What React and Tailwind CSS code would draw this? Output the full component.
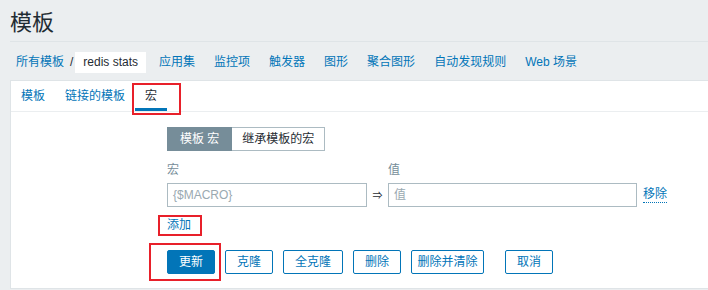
export default function App() {
  const navItems = ['应用集', '监控项', '触发器', '图形', '聚合图形', '自动发现规则', 'Web 场景'];
  const buttons = [
    { label: '克隆', w: 'w-[48px]' },
    { label: '全克隆', w: 'w-[60px]' },
    { label: '删除', w: 'w-[48px]' },
    { label: '删除并清除', w: 'w-[73px]' },
  ];

  return (
    <div className="min-h-[290px] bg-[#ebeef0] pl-[10px] text-[12px] text-[#1f2c33] font-['Liberation_Sans','Noto_Sans_CJK_SC',sans-serif]">
      {/* Header */}
      <div className="h-[42px] pt-[7px] border-b border-[#dfe4e7]">
        <h1 className="text-[22px] leading-[32px] font-normal">模板</h1>
      </div>

      {/* Breadcrumbs / navigation */}
      <div className="h-[38px] pt-[2px] flex items-center">
        <a className="pl-[6px] text-[#0275b8]">所有模板</a>
        <span className="ml-[6px] text-[#1f2c33]">/</span>
        <span className="ml-[2px] bg-white px-[8px] h-[21px] flex items-center">redis stats</span>
        <div className="flex items-center gap-[7px] ml-[7px]">
          {navItems.map((item) => (
            <a key={item} className="px-[6px] text-[#0275b8]">{item}</a>
          ))}
        </div>
      </div>

      {/* Panel */}
      <div className="bg-white border border-[#dfe4e7] border-r-0 h-[209px]">
        {/* Tabs */}
        <div className="flex h-[31px] border-b border-[#ebeef0]">
          <a className="px-[10px] flex items-center text-[#0275b8]">模板</a>
          <a className="px-[10px] flex items-center text-[#0275b8]">链接的模板</a>
          <div className="relative px-[10px] flex items-center border-b-[3px] border-[#0275b8] pt-[3px]">
            宏
            <span className="absolute left-[-3px] right-[-14px] top-[2px] bottom-[-7px] border-2 border-[#e8202a]" />
          </div>
        </div>

        {/* Form */}
        <div className="pl-[156px] pt-[15px]">
          <div className="flex h-[24px]">
            <span className="px-[12px] flex items-center bg-[#768d99] text-white border border-[#768d99]">模板 宏</span>
            <span className="px-[10px] flex items-center bg-white border border-l-0 border-[#acbbc2] text-[#1f2c33]">继承模板的宏</span>
          </div>

          <div className="flex mt-[9px] leading-[20px] text-[#768d99]">
            <span className="w-[221px]">宏</span>
            <span>值</span>
          </div>

          <div className="flex items-center mt-[3px]">
            <div className="w-[200px] h-[24px] border border-[#acbbc2] px-[5px] flex items-center text-[#9aa9b1]">{'{$MACRO}'}</div>
            <span className="w-[21px] text-center text-[10px] text-[#1f2c33]">⇒</span>
            <div className="w-[249px] h-[24px] border border-[#acbbc2] px-[5px] flex items-center text-[#9aa9b1]">值</div>
            <a className="ml-[6px] text-[#0275b8] border-b border-dotted border-[#0275b8] leading-[15px]">移除</a>
          </div>

          <div className="mt-[8px] leading-[20px]">
            <a className="relative text-[#0275b8]">
              添加
              <span className="absolute left-[-9px] right-[-11px] top-[-3px] bottom-[-4px] border-2 border-[#e8202a]" />
            </a>
          </div>

          <div className="flex mt-[15px] gap-[10px]">
            <div className="relative">
              <button className="w-[48px] h-[24px] bg-[#0275b8] border border-[#0275b8] text-white rounded-[2px]">更新</button>
              <span className="absolute left-[-18px] right-[-6px] top-[-7px] bottom-[-7px] border-2 border-[#e8202a]" />
            </div>
            {buttons.map((b) => (
              <button key={b.label} className={`${b.w} h-[24px] bg-white border border-[#0275b8] text-[#0275b8] rounded-[2px]`}>{b.label}</button>
            ))}
            <button className="ml-[11px] w-[48px] h-[24px] bg-white border border-[#0275b8] text-[#0275b8] rounded-[2px]">取消</button>
          </div>
        </div>
      </div>
    </div>
  );
}
